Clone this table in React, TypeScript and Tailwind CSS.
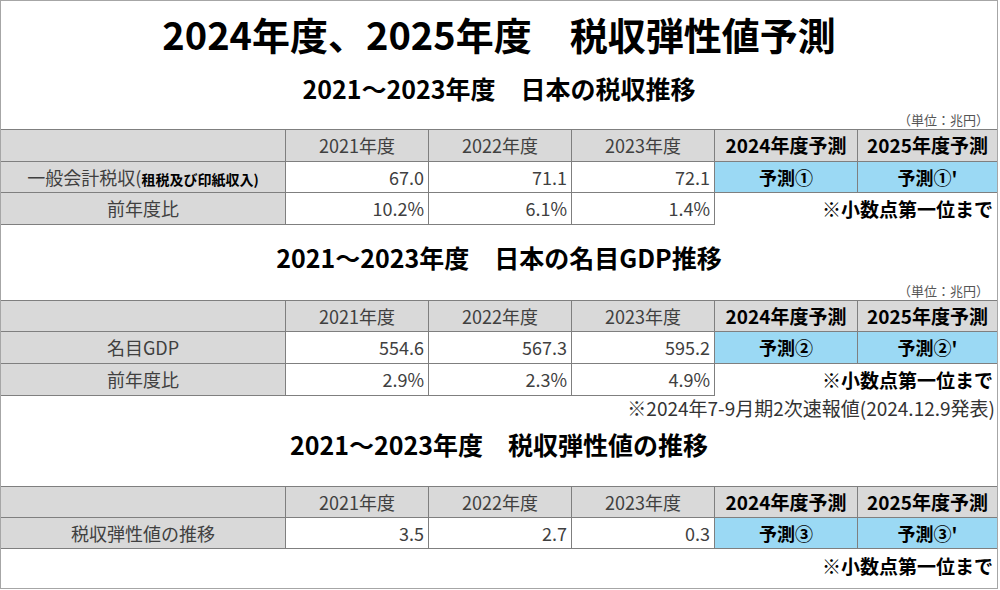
import type { ReactNode } from "react";

const grid = "grid grid-cols-[285px_143px_143px_143px_143px_1fr] border-t border-[#7f7f7f]";
const cell = "flex items-center border-b border-[#7f7f7f] whitespace-nowrap";

type Row = { label: ReactNode; values: string[]; preds?: string[] };

const Head = ({ h }: { h: string }) => (
  <>
    <div className={`${cell} ${h} border-r bg-[#d9d9d9]`} />
    {["2021年度", "2022年度", "2023年度"].map((y) => (
      <div key={y} className={`${cell} ${h} border-r bg-[#d9d9d9] justify-center text-[18px] text-[#404040]`}>
        {y}
      </div>
    ))}
    <div className={`${cell} ${h} border-r bg-[#d9d9d9] justify-center text-[19px] font-bold text-black`}>2024年度予測</div>
    <div className={`${cell} ${h} bg-[#d9d9d9] justify-center text-[19px] font-bold text-black`}>2025年度予測</div>
  </>
);

const DataRow = ({ row, h, note }: { row: Row; h: string; note?: boolean }) => (
  <>
    <div className={`${cell} ${h} border-r bg-[#d9d9d9] justify-center text-[18px] text-[#404040]`}>{row.label}</div>
    {row.values.map((v, i) => (
      <div key={i} className={`${cell} ${h} border-r bg-white justify-end pr-1 text-[18px] text-[#404040]`}>
        {v}
      </div>
    ))}
    {row.preds ? (
      <>
        <div className={`${cell} ${h} border-r bg-[#9bd9f4] justify-center text-[18px] font-bold text-black`}>{row.preds[0]}</div>
        <div className={`${cell} ${h} bg-[#9bd9f4] justify-center text-[18px] font-bold text-black`}>{row.preds[1]}</div>
      </>
    ) : (
      <div className={`${h} col-span-2 flex items-center justify-end pr-1 text-[19px] font-bold text-black`}>
        {note ? "※小数点第一位まで" : ""}
      </div>
    )}
  </>
);

const SectionTitle = ({ children, cls }: { children: ReactNode; cls: string }) => (
  <div className={`flex justify-center items-center text-[25px] font-bold text-black ${cls}`}>{children}</div>
);

const Unit = () => (
  <div className="h-[19px] flex items-center justify-end pr-[8px] text-[13px] text-[#555]">（単位：兆円）</div>
);

export default function App() {
  return (
    <div className="w-[1000px] h-[590px] bg-white font-['Noto_Sans_CJK_JP','Noto_Sans',sans-serif]">
      <div className="w-[998px] h-[589px] border border-[#a6a6a6] flex flex-col">
        <div className="h-[64px] flex items-center justify-center text-[38px] font-bold text-black">
          2024年度、2025年度　税収弾性値予測
        </div>
        <SectionTitle cls="h-[45px] pt-[2px]">2021～2023年度　日本の税収推移</SectionTitle>
        <Unit />

        <div className={grid}>
          <Head h="h-[32px]" />
          <DataRow
            h="h-[31px]"
            row={{
              label: (
                <span>
                  一般会計税収(<span className="text-[14px] font-bold text-black">租税及び印紙収入)</span>
                </span>
              ),
              values: ["67.0", "71.1", "72.1"],
              preds: ["予測①", "予測①'"],
            }}
          />
          <DataRow h="h-[32px]" note row={{ label: "前年度比", values: ["10.2%", "6.1%", "1.4%"] }} />
        </div>

        <SectionTitle cls="h-[56px] pt-[10px]">2021～2023年度　日本の名目GDP推移</SectionTitle>
        <Unit />

        <div className={grid}>
          <Head h="h-[31px]" />
          <DataRow
            h="h-[32px]"
            row={{ label: "名目GDP", values: ["554.6", "567.3", "595.2"], preds: ["予測②", "予測②'"] }}
          />
          <DataRow h="h-[32px]" note row={{ label: "前年度比", values: ["2.9%", "2.3%", "4.9%"] }} />
        </div>

        <div className="h-[24px] flex items-center justify-end pr-[2px] text-[19px] text-[#333]">
          ※2024年7-9月期2次速報値(2024.12.9発表)
        </div>

        <SectionTitle cls="h-[66px] pb-[16px]">2021～2023年度　税収弾性値の推移</SectionTitle>

        <div className={grid}>
          <Head h="h-[31px]" />
          <DataRow
            h="h-[31px]"
            row={{ label: "税収弾性値の推移", values: ["3.5", "2.7", "0.3"], preds: ["予測③", "予測③'"] }}
          />
        </div>

        <div className="h-[34px] flex items-center justify-end pr-1 text-[19px] font-bold text-black">
          ※小数点第一位まで
        </div>
      </div>
    </div>
  );
}
